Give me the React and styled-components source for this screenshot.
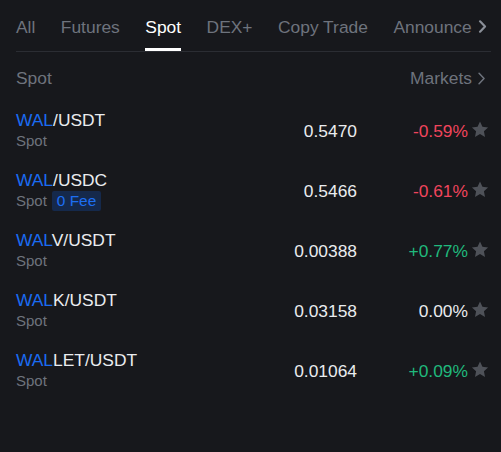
import styled, { createGlobalStyle } from 'styled-components';

const GlobalStyle = createGlobalStyle`
  html, body {
    margin: 0;
    padding: 0;
    background: #17181c;
  }
  body {
    font-family: 'Liberation Sans', Arial, sans-serif;
  }
`;

const Page = styled.div`
  width: 501px;
  height: 452px;
  background: #17181c;
  color: #eaecef;
  overflow: hidden;
`;

const TabBar = styled.div`
  display: flex;
  align-items: flex-end;
  margin: 0 10px 0 16px;
  border-bottom: 1px solid #2b2d33;
`;

const Tabs = styled.div`
  display: flex;
  gap: 25.5px;
  white-space: nowrap;
  flex: 1;
`;

const Tab = styled.div`
  font-size: 17.4px;
  line-height: 20px;
  padding: 17px 0 11px;
  border-bottom: 3px solid ${(p) => (p.$active ? '#ffffff' : 'transparent')};
  color: ${(p) => (p.$active ? '#ffffff' : '#6e737d')};
  flex-shrink: 0;
`;

const TabArrow = styled.div`
  display: flex;
  align-items: center;
  height: 51px;
  padding: 1px 4px 0 0;
  box-sizing: border-box;
  color: #8a8f98;
`;

const SectionHead = styled.div`
  display: flex;
  justify-content: space-between;
  align-items: center;
  padding: 15px 15px 11px 16px;
  font-size: 17.4px;
  line-height: 22px;
  color: #6e737d;
`;

const MarketsLink = styled.div`
  display: flex;
  align-items: center;
  gap: 5px;
`;

const Row = styled.div`
  display: grid;
  grid-template-columns: 1fr 120px 111px 21px;
  align-items: center;
  height: 60px;
  padding: 0 12px 0 16px;
  box-sizing: border-box;
`;

const NameCell = styled.div`
  display: flex;
  flex-direction: column;
  padding-bottom: 1px;
`;

const Pair = styled.div`
  font-size: 17.4px;
  line-height: 22px;
  color: #eaecef;
`;

const Base = styled.span`
  color: #1b6cf2;
`;

const SubLine = styled.div`
  display: flex;
  align-items: center;
  gap: 5px;
  font-size: 15px;
  line-height: 20px;
  color: #6e737d;
`;

const Badge = styled.span`
  background: #15294b;
  color: #1d6ff3;
  border-radius: 2px;
  padding: 0 5px;
  font-size: 15.4px;
  line-height: 20px;
`;

const Price = styled.div`
  text-align: right;
  font-size: 17.4px;
  color: #eaecef;
  padding-top: 3px;
`;

const Change = styled.div`
  text-align: right;
  font-size: 17.4px;
  padding-top: 3px;
  color: ${(p) => (p.$dir > 0 ? '#20b97c' : p.$dir < 0 ? '#f0455c' : '#eaecef')};
`;

const StarBox = styled.div`
  display: flex;
  justify-content: flex-end;
  color: #4e5158;
  padding-bottom: 1px;
`;

function Chevron({ size = 12, weight = 1.6 }) {
  return (
    <svg width={size * 0.7} height={size} viewBox="0 0 7 12" fill="none">
      <path d="M1.2 1.2 L5.8 6 L1.2 10.8" stroke="currentColor" strokeWidth={weight} strokeLinecap="round" strokeLinejoin="round" />
    </svg>
  );
}

function Star() {
  return (
    <svg width="18" height="17" viewBox="0 0 24 23">
      <path
        fill="currentColor"
        d="M12 0.8l3.3 7 7.6.9-5.6 5.2 1.5 7.6L12 17.7l-6.8 3.8 1.5-7.6L1.1 8.7l7.6-.9z"
      />
    </svg>
  );
}

const tabs = ['All', 'Futures', 'Spot', 'DEX+', 'Copy Trade', 'Announce'];

const rows = [
  { base: 'WAL', rest: '/USDT', price: '0.5470', change: '-0.59%', dir: -1 },
  { base: 'WAL', rest: '/USDC', price: '0.5466', change: '-0.61%', dir: -1, fee: true },
  { base: 'WAL', rest: 'V/USDT', price: '0.00388', change: '+0.77%', dir: 1 },
  { base: 'WAL', rest: 'K/USDT', price: '0.03158', change: '0.00%', dir: 0 },
  { base: 'WAL', rest: 'LET/USDT', price: '0.01064', change: '+0.09%', dir: 1 },
];

export default function App() {
  return (
    <Page>
      <GlobalStyle />
      <TabBar>
        <Tabs>
          {tabs.map((t) => (
            <Tab key={t} $active={t === 'Spot'}>
              {t}
            </Tab>
          ))}
        </Tabs>
        <TabArrow>
          <Chevron size={13} weight={2} />
        </TabArrow>
      </TabBar>
      <SectionHead>
        <span>Spot</span>
        <MarketsLink>
          Markets <Chevron size={13} weight={1.4} />
        </MarketsLink>
      </SectionHead>
      {rows.map((r, i) => (
        <Row key={i}>
          <NameCell>
            <Pair>
              <Base>{r.base}</Base>
              {r.rest}
            </Pair>
            <SubLine>
              Spot
              {r.fee && <Badge>0 Fee</Badge>}
            </SubLine>
          </NameCell>
          <Price>{r.price}</Price>
          <Change $dir={r.dir}>{r.change}</Change>
          <StarBox>
            <Star />
          </StarBox>
        </Row>
      ))}
    </Page>
  );
}
